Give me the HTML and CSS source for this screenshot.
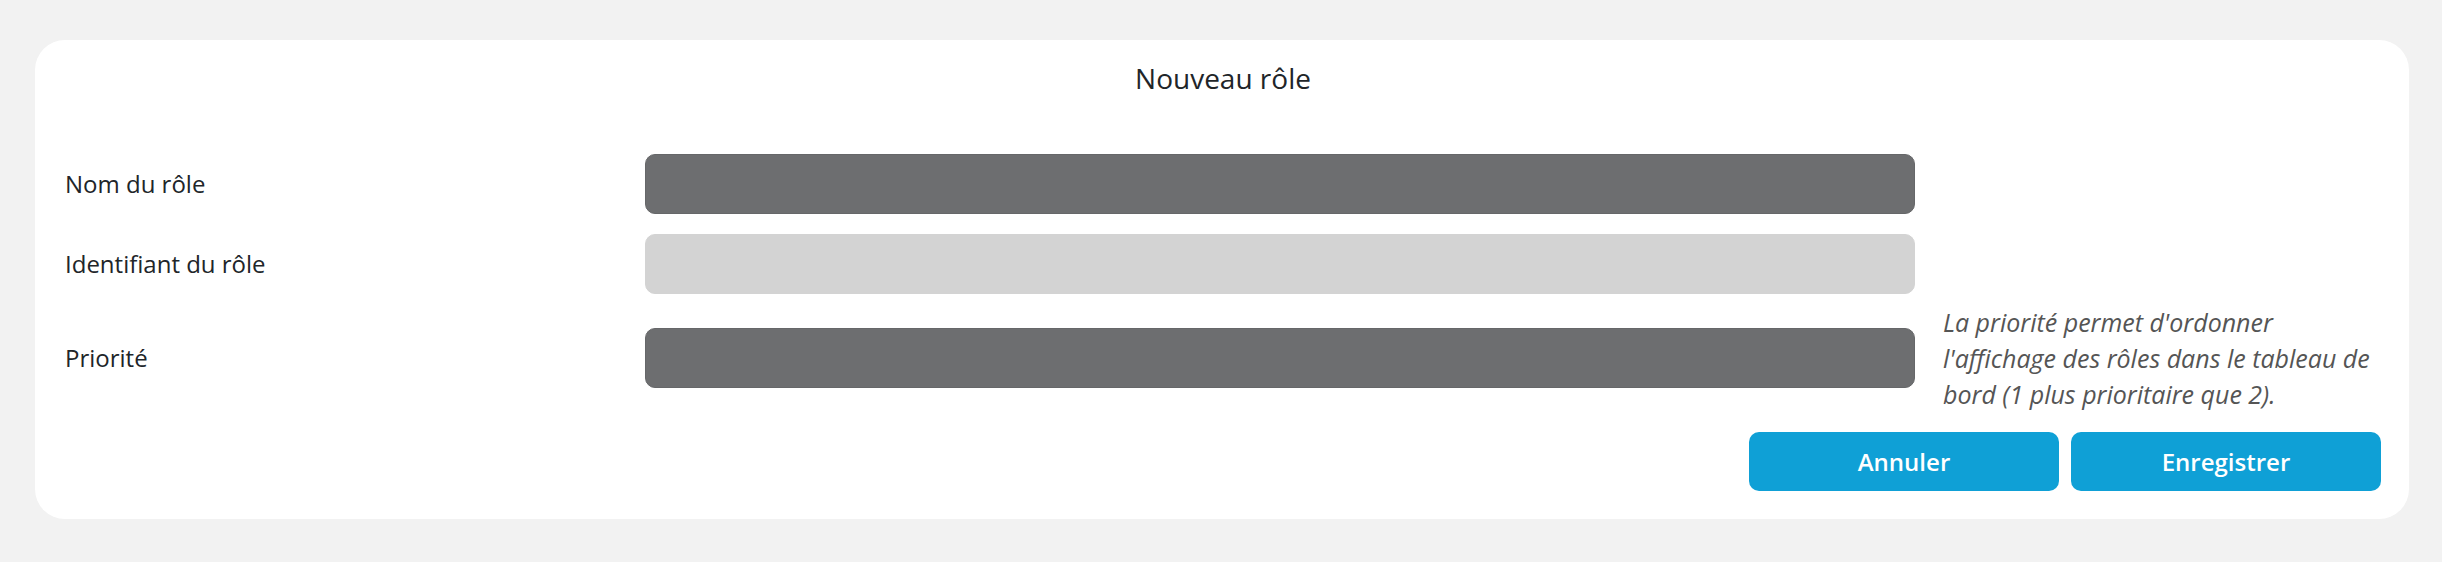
FILE: index.html
```html
<!DOCTYPE html>
<html lang="fr">
<head>
<meta charset="utf-8">
<title>Nouveau rôle</title>
<link rel="stylesheet" href="styles.css">
</head>
<body>
<div class="card">
  <h1 class="title">Nouveau rôle</h1>
  <form class="form">
    <div class="row">
      <label class="label">Nom du rôle</label>
      <div class="input input-dark"></div>
      <div class="help"></div>
    </div>
    <div class="row">
      <label class="label">Identifiant du rôle</label>
      <div class="input input-light"></div>
      <div class="help"></div>
    </div>
    <div class="row row-help">
      <label class="label">Priorité</label>
      <div class="input input-dark"></div>
      <p class="help">La priorité permet d'ordonner l'affichage des rôles dans le tableau de bord (1 plus prioritaire que 2).</p>
    </div>
    <div class="actions">
      <button type="button" class="btn">Annuler</button>
      <button type="button" class="btn">Enregistrer</button>
    </div>
  </form>
</div>
</body>
</html>
```
FILE: styles.css
```css
html, body {
  margin: 0;
  padding: 0;
}
body {
  background: #f2f2f2;
  font-family: "Open Sans", "Liberation Sans", sans-serif;
  color: #212529;
  padding: 40px 33px 43px 35px;
}
.card {
  background: #ffffff;
  border-radius: 30px;
  padding: 22px 28px 28px 30px;
}
.title {
  margin: 0;
  text-align: center;
  font-size: 28px;
  font-weight: 400;
  line-height: 32px;
  color: #212529;
}
.form {
  margin-top: 60px;
  display: flex;
  flex-direction: column;
  gap: 20px;
}
.row {
  display: grid;
  grid-template-columns: 580px 1270px 1fr;
  align-items: center;
}
.row-help {
  margin-top: -10px;
}
.label {
  font-size: 24px;
  line-height: 32px;
  color: #212529;
}
.input {
  height: 60px;
  border-radius: 10px;
  box-sizing: border-box;
}
.input-dark {
  background: #6d6e70;
  border: 1px solid #666769;
}
.input-light {
  background: #d3d3d3;
  border: 1px solid #d3d3d3;
}
.help {
  margin: 0;
  padding-left: 28px;
  margin-right: -8px;
  font-size: 25px;
  line-height: 36px;
  font-style: italic;
  color: #555555;
}
.actions {
  display: flex;
  justify-content: flex-end;
  gap: 12px;
  margin-top: 0;
}
.btn {
  width: 310px;
  height: 59px;
  border: none;
  border-radius: 10px;
  background: #0fa0d6;
  color: #ffffff;
  font-family: "Open Sans", "Liberation Sans", sans-serif;
  font-size: 24px;
  font-weight: 600;
  padding: 0;
}
```
